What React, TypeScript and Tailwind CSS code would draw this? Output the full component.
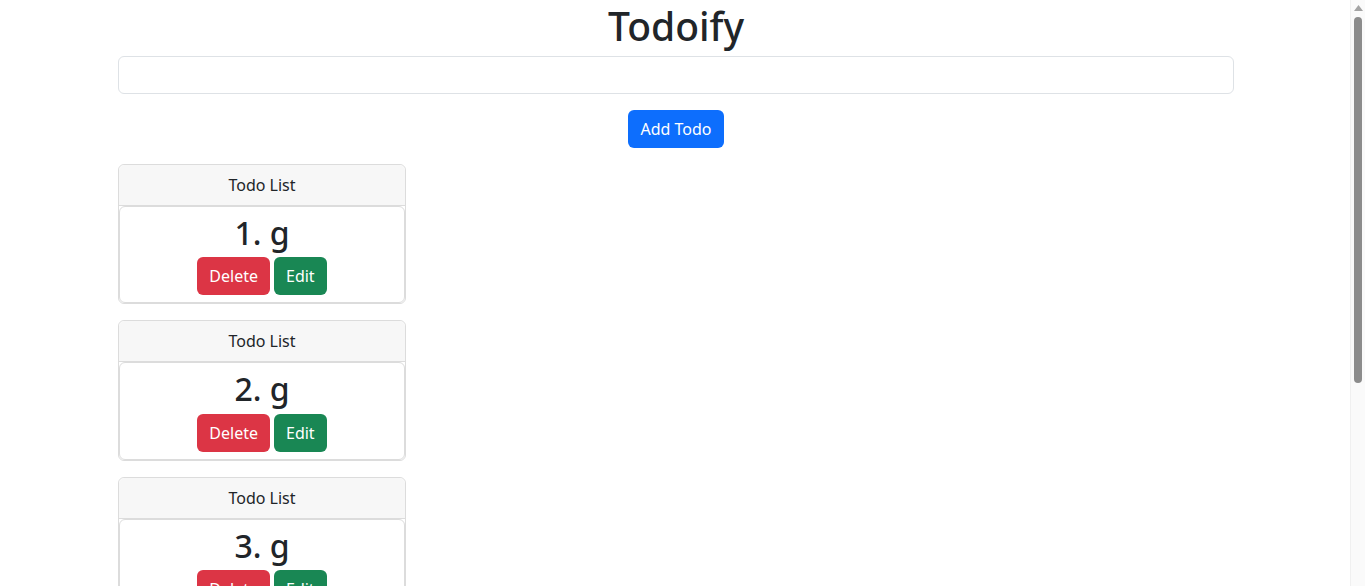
const todos = ['g', 'g', 'g', 'g'];

function TodoCard({ index, text }: { index: number; text: string }) {
  return (
    <div className="w-[288px] rounded-md border border-[#dcdcdc] bg-white">
      <div className="rounded-t-md border-b border-[#dcdcdc] bg-[#f7f7f7] py-2 text-center text-base leading-6">
        Todo List
      </div>
      <div className="rounded-md border border-[#dcdcdc] pb-[7px] pt-[7px] text-center">
        <h2 className="mb-[5px] text-[32px] font-medium leading-[1.2]">
          {index}. {text}
        </h2>
        <div className="flex justify-center gap-1">
          <button className="h-[38px] rounded-md bg-[#dc3545] px-3 text-base text-white">Delete</button>
          <button className="h-[38px] rounded-md bg-[#198754] px-3 text-base text-white">Edit</button>
        </div>
      </div>
    </div>
  );
}

function ScrollBar() {
  return (
    <div className="fixed right-0 top-0 flex h-screen w-[15px] flex-col items-center border-l border-[#f0f0f0] bg-[#fafafa]">
      <svg width="9" height="6" viewBox="0 0 9 6" className="mt-[5px]">
        <path d="M4.5 0 L9 6 L0 6 Z" fill="#a3a3a3" />
      </svg>
      <div className="mt-[6px] h-[366px] w-[8px] rounded-full bg-[#8c8c8c]" />
    </div>
  );
}

export default function App() {
  return (
    <div className="min-h-[884px] bg-white pl-[2px] pr-[15px] font-['Noto_Sans',sans-serif] text-[#212529]">
      <div className="mx-auto max-w-[1140px] px-3">
        <h1 className="mb-[6px] pt-[2px] text-center text-[39px] font-medium leading-[1.23]">Todoify</h1>
        <input
          type="text"
          className="block h-[38px] w-full rounded-md border border-[#dee2e6] px-3 outline-none"
        />
        <div className="mt-4 flex justify-center">
          <button className="h-[38px] rounded-md bg-[#0d6efd] px-3 text-base text-white">Add Todo</button>
        </div>
        <div className="mt-4 flex flex-col gap-4">
          {todos.map((t, i) => (
            <TodoCard key={i} index={i + 1} text={t} />
          ))}
        </div>
      </div>
      <ScrollBar />
    </div>
  );
}
